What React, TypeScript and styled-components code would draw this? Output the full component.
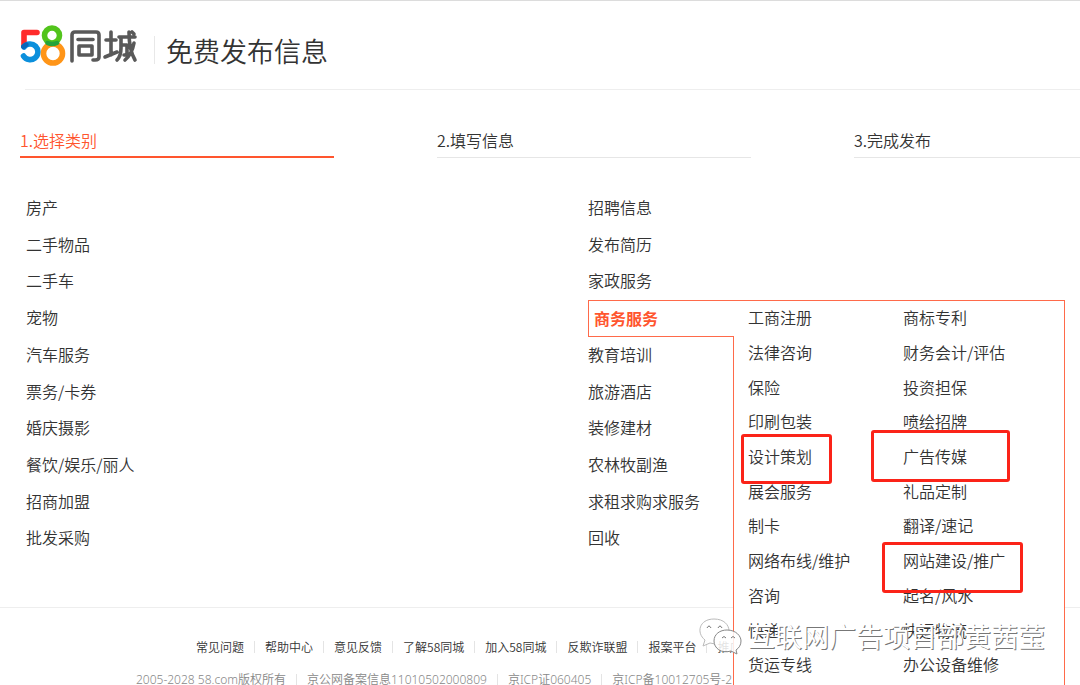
import React from "react";
import styled, { createGlobalStyle } from "styled-components";

const Global = createGlobalStyle`
  * { box-sizing: border-box; }
  body { margin: 0; background: #fff; color: #333; font: 350 16px/24px "Noto Sans CJK SC", sans-serif; }
  a { color: inherit; text-decoration: none; }
  ul, ol, h1 { margin: 0; padding: 0; list-style: none; font-weight: inherit; }
`;

const Page = styled.div`
  position: relative;
  height: 100vh;
  overflow: hidden;
  border-top: 1px solid #dcdcdc;
`;

const Header = styled.header`
  display: flex;
  height: 88px;
  margin-left: 20px;
`;

const Brand = styled.a`
  display: block;
  width: 118px;
  height: 42px;
  margin-top: 24px;
  svg { display: block; }
`;

const Title = styled.h1`
  height: 28px;
  margin: 35px 0 0 16px;
  padding: 1px 0 0 11px;
  border-left: 1px solid #e8e8e8;
  font-size: 27px;
  line-height: 28px;
`;

const Steps = styled.ol`
  display: grid;
  grid-template-columns: repeat(3, 314px);
  gap: 103px;
  margin-left: 20px;
  padding-top: 38px;
`;

const Step = styled.li<{ $active?: boolean }>`
  height: 30px;
  color: ${(p) => (p.$active ? "#ff552e" : "#333")};
  border-bottom: ${(p) => (p.$active ? "2px solid #ff552e" : "1px solid #e6e6e6")};
`;

const Rule = styled.div`
  margin-left: 25px;
  border-top: 1px solid #eee;
`;

const Categories = styled.main`
  display: grid;
  grid-template-columns: repeat(2, 562px);
  margin: 32px 0 0 26px;
`;

const CategoryList = styled.ul`
  display: grid;
  grid-auto-rows: 1fr;
  height: 367px;
`;

const Category = styled.li`
  position: relative;
  padding-top: 5px;
`;

const Tab = styled.a`
  position: absolute;
  z-index: 3;
  top: 0;
  left: 0;
  width: 146px;
  height: 37px;
  padding-left: 5px;
  border: 1px solid #ff6a4a;
  border-right: 0;
  background: #fff;
  color: #ff552e;
  font-weight: 700;
  line-height: 35px;
`;

const Panel = styled.div`
  position: absolute;
  z-index: 2;
  top: 0;
  left: 145px;
  width: 332px;
  padding: 0 0 30px 14px;
  border: 1px solid #ff6a4a;
  background: #fff;
`;

const SubList = styled.ul`
  display: grid;
  grid-template-columns: repeat(2, 155px);
  grid-auto-rows: 1fr;
  height: 382px;
  li { padding-top: 4px; }
`;

const Mark = styled.span<{ $x: number; $y: number; $w: number; $h: number }>`
  position: absolute;
  left: ${(p) => p.$x}px;
  top: ${(p) => p.$y}px;
  width: ${(p) => p.$w}px;
  height: ${(p) => p.$h}px;
  border: 3px solid #fb2318;
  border-radius: 3px;
`;

const Footer = styled.footer`
  margin-top: 50px;
  padding-top: 29px;
  border-top: 1px solid #eee;
  font-size: 12px;
  line-height: 20px;
`;

const FootRow = styled.ul<{ $indent: number; $muted?: boolean }>`
  display: flex;
  margin: 0 0 13px ${(p) => p.$indent}px;
  color: ${(p) => (p.$muted ? "#888" : "#333")};
  font-family: ${(p) => (p.$muted ? '"Noto Sans", ' : "")}"Noto Sans CJK SC", sans-serif;
  white-space: nowrap;
  li { display: flex; align-items: center; }
  li + li::before {
    content: "";
    height: 12px;
    margin: 0 10px;
    border-left: 1px solid #e4e4e4;
  }
`;

const Watermark = styled.div`
  position: absolute;
  z-index: 5;
  left: 698px;
  top: 615px;
  display: flex;
  align-items: center;
  gap: 6px;
  color: #fff;
  font-size: 27px;
  font-weight: 400;
  line-height: 40px;
  white-space: nowrap;
  text-shadow: 1px 1px 0 #777;
`;

const left = ["房产", "二手物品", "二手车", "宠物", "汽车服务", "票务/卡券", "婚庆摄影", "餐饮/娱乐/丽人", "招商加盟", "批发采购"];
const right = ["招聘信息", "发布简历", "家政服务", "商务服务", "教育培训", "旅游酒店", "装修建材", "农林牧副渔", "求租求购求服务", "回收"];
const services = [
  "工商注册", "商标专利", "法律咨询", "财务会计/评估", "保险", "投资担保", "印刷包装", "喷绘招牌",
  "设计策划", "广告传媒", "展会服务", "礼品定制", "制卡", "翻译/速记", "网络布线/维护", "网站建设/推广",
  "咨询", "起名/风水", "快递", "快运物流", "货运专线", "办公设备维修",
];
const links = ["常见问题", "帮助中心", "意见反馈", "了解58同城", "加入58同城", "反欺诈联盟", "报案平台", "推广"];
const legal = ["2005-2028 58.com版权所有", "京公网备案信息11010502000809", "京ICP证060405", "京ICP备10012705号-2"];

const Logo = () => (
  <svg width="118" height="42" viewBox="0 0 118 42" fill="none" strokeLinecap="round" strokeLinejoin="round" role="img" aria-label="58同城">
    <g strokeWidth="5.6">
      <path d="M17 7.500H4V21" stroke="#ff2b2b" />
      <path d="M4 22A7.800 7.800 0 1 1 3.500 31" stroke="#0b8fdc" />
      <circle cx="33" cy="28.500" r="9.500" stroke="#ff9518" />
      <circle cx="32" cy="10.500" r="7.500" stroke="#52c41c" />
      <path d="M27.500 18Q32 20 37 18" stroke="#24a33a" strokeWidth="4.500" />
      <path d="M3.600 21.500L6 19.800" stroke="#0a67b8" strokeWidth="5" />
    </g>
    <g stroke="#595959" strokeWidth="3.600">
      <path d="M52 36V10Q52 7 55 7H76Q79 7 79 10V32Q79 35 75 35H73M58 14.500H73M59 21H72V30H59Z" />
      <path d="M86 15H96M91 7V30M85 32L97 27M99 12H115M101 12V23Q101 31 97 35M102 20H107V28Q107 30 104 30M109 7Q109 25 115 35M114 18Q112 29 105 35M112 7L114 9" />
    </g>
  </svg>
);

const ChatIcon = () => (
  <svg width="44" height="40" viewBox="0 0 44 40" fill="#fff" fillOpacity=".86" stroke="#888" strokeWidth="1">
    <path d="M17 28L12 27L5 30L7 24C-2 17 1 3 16 3C26 3 31 9 31 15" stroke="#bbb" />
    <path d="M38 34L39 38L33 35C23 38 16 32 16 25C16 18 22 14 29 14C38 14 43 20 43 25C43 29 41 32 38 34Z" />
    <g fill="none" stroke="#777">
      <path d="M9 12Q11 8 13 12M20 12Q22 8 24 12M24 22Q26 19 28 22M33 22Q35 19 37 22" />
    </g>
  </svg>
);

export default function App() {
  return (
    <>
      <Global />
      <Page>
        <Header>
          <Brand href="#"><Logo /></Brand>
          <Title>免费发布信息</Title>
        </Header>
        <Rule />
        <Steps>
          <Step $active>1.选择类别</Step>
          <Step>2.填写信息</Step>
          <Step>3.完成发布</Step>
        </Steps>
        <Categories>
          <CategoryList>
            {left.map((name) => <Category key={name}><a href="#">{name}</a></Category>)}
          </CategoryList>
          <CategoryList>
            {right.map((name) => (
              <Category key={name}>
                {name === "商务服务" ? (
                  <>
                    <Tab href="#">{name}</Tab>
                    <Panel>
                      <SubList>
                        {services.map((s) => <li key={s}><a href="#">{s}</a></li>)}
                      </SubList>
                      <Mark $x={7} $y={133} $w={91} $h={50} />
                      <Mark $x={137} $y={129} $w={139} $h={52} />
                      <Mark $x={148} $y={241} $w={141} $h={51} />
                    </Panel>
                  </>
                ) : <a href="#">{name}</a>}
              </Category>
            ))}
          </CategoryList>
        </Categories>
        <Footer>
          <FootRow $indent={196}>
            {links.map((l) => <li key={l}><a href="#">{l}</a></li>)}
          </FootRow>
          <FootRow $indent={136} $muted>
            {legal.map((l) => <li key={l}>{l}</li>)}
          </FootRow>
        </Footer>
        <Watermark><ChatIcon />互联网广告项目部黄茜莹</Watermark>
      </Page>
    </>
  );
}
